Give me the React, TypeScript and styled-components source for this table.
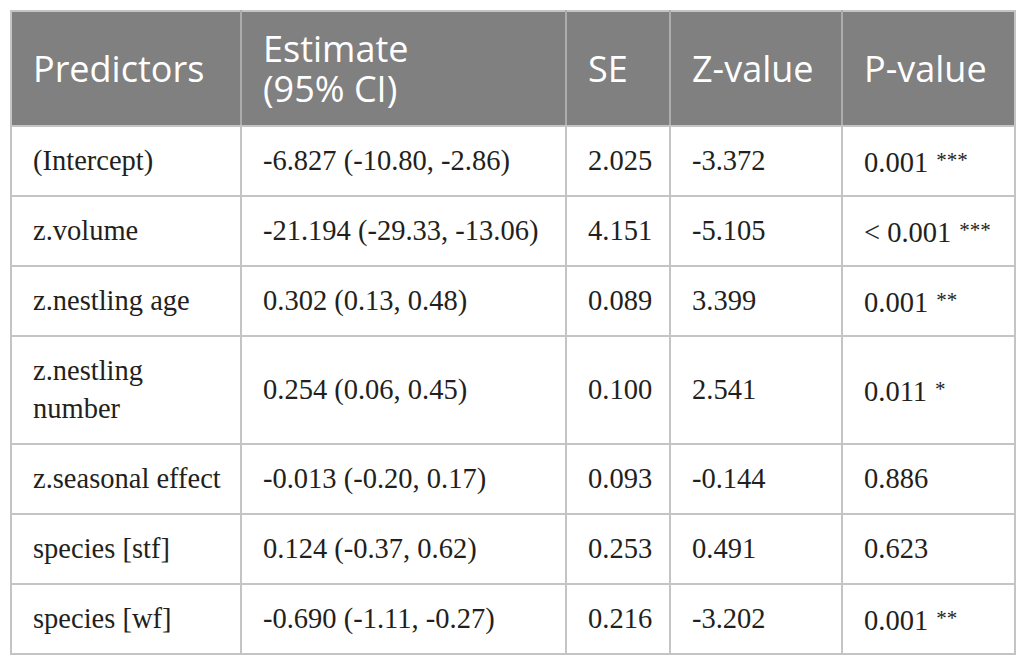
import React from 'react';
import styled, { createGlobalStyle } from 'styled-components';

const GlobalStyle = createGlobalStyle`
  html, body {
    margin: 0;
    padding: 0;
    background: #ffffff;
  }
`;

interface Row {
  predictor: string;
  estimate: string;
  se: string;
  z: string;
  p: string;
  stars?: string;
}

const rows: Row[] = [
  { predictor: '(Intercept)', estimate: '-6.827 (-10.80, -2.86)', se: '2.025', z: '-3.372', p: '0.001', stars: '***' },
  { predictor: 'z.volume', estimate: '-21.194 (-29.33, -13.06)', se: '4.151', z: '-5.105', p: '< 0.001', stars: '***' },
  { predictor: 'z.nestling age', estimate: '0.302 (0.13, 0.48)', se: '0.089', z: '3.399', p: '0.001', stars: '**' },
  { predictor: 'z.nestling number', estimate: '0.254 (0.06, 0.45)', se: '0.100', z: '2.541', p: '0.011', stars: '*' },
  { predictor: 'z.seasonal effect', estimate: '-0.013 (-0.20, 0.17)', se: '0.093', z: '-0.144', p: '0.886' },
  { predictor: 'species [stf]', estimate: '0.124 (-0.37, 0.62)', se: '0.253', z: '0.491', p: '0.623' },
  { predictor: 'species [wf]', estimate: '-0.690 (-1.11, -0.27)', se: '0.216', z: '-3.202', p: '0.001', stars: '**' },
];

const colWidths = [230, 325, 104, 172, 173];

const App: React.FC = () => {
  return (
    <Page>
      <GlobalStyle />
      <Table>
        <colgroup>
          {colWidths.map((w, i) => (
            <col key={i} style={{ width: w }} />
          ))}
        </colgroup>
        <thead>
          <tr>
            <HeadCell>Predictors</HeadCell>
            <HeadCell>
              <HeadLine>Estimate</HeadLine>
              <HeadLine>(95% CI)</HeadLine>
            </HeadCell>
            <HeadCell>SE</HeadCell>
            <HeadCell>Z-value</HeadCell>
            <HeadCell>P-value</HeadCell>
          </tr>
        </thead>
        <tbody>
          {rows.map((r) => (
            <BodyRow key={r.predictor} $tall={r.predictor === 'z.nestling number'}>
              <Cell>
                {r.predictor === 'z.nestling number' ? (
                  <>
                    z.nestling
                    <br />
                    number
                  </>
                ) : (
                  r.predictor
                )}
              </Cell>
              <Cell>{r.estimate}</Cell>
              <Cell>{r.se}</Cell>
              <Cell>{r.z}</Cell>
              <Cell>
                {r.p}
                {r.stars && <Stars>{r.stars}</Stars>}
              </Cell>
            </BodyRow>
          ))}
        </tbody>
      </Table>
    </Page>
  );
};
export default App;

const Page = styled.div`
  padding: 10px 0 0 10px;
`;

const Table = styled.table`
  border-collapse: collapse;
  table-layout: fixed;
  width: 1004px;
  border: 2px solid #c4c4c4;
`;

const HeadCell = styled.th`
  height: 113px;
  padding: 0 20px 0 21px;
  background: #808080;
  color: #ffffff;
  font-family: 'Open Sans', Lato, sans-serif;
  font-weight: 400;
  font-size: 36px;
  line-height: 40px;
  text-align: left;
  vertical-align: middle;
  white-space: nowrap;
  border-left: 2px solid #acacac;
  border-bottom: 2px solid #c4c4c4;
  &:first-child {
    border-left: none;
  }
`;

const HeadLine = styled.div`
  height: 40px;
  line-height: 40px;
`;

const BodyRow = styled.tr<{ $tall?: boolean }>`
  height: ${({ $tall }) => ($tall ? '108px' : '70px')};
`;

const Cell = styled.td`
  padding: 0 21px;
  color: #231f20;
  font-family: 'Liberation Serif', 'DejaVu Serif', serif;
  font-size: 28.5px;
  line-height: 38px;
  vertical-align: middle;
  border: 2px solid #c4c4c4;
  white-space: nowrap;
`;

const Stars = styled.span`
  margin-left: 8px;
  font-size: 21px;
  vertical-align: 5px;
`;
